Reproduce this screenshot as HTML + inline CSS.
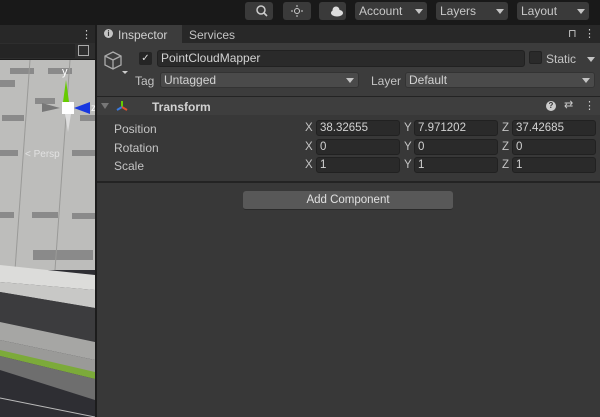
<!DOCTYPE html>
<html><head><meta charset="utf-8"><style>
*{box-sizing:border-box;margin:0;padding:0}
body{width:600px;height:417px;overflow:hidden;background:#191919;font-family:"Liberation Sans",sans-serif;font-size:11px;color:#c4c4c4;position:relative}
.a{position:absolute}
.btn{position:absolute;top:2px;height:18px;background:#3a3a3a;border-radius:3px;color:#c8c8c8;font-size:12px;line-height:18px;padding-left:4px}
.tri{position:absolute;width:0;height:0;border-left:4px solid transparent;border-right:4px solid transparent;border-top:5px solid #c4c4c4}
.fld{position:absolute;height:16px;background:#2a2a2a;border:1px solid #212121;border-radius:3px;color:#d2d2d2;line-height:14px;padding-left:3px;font-size:11.5px}
.lbl{position:absolute;font-size:11.5px;color:#c4c4c4}
</style></head><body>
<div class="btn" style="left:245px;width:28px"><svg width="28" height="18"><circle cx="12" cy="8" r="4" stroke="#ccc" stroke-width="1.5" fill="none"/><line x1="15" y1="11" x2="18" y2="14" stroke="#ccc" stroke-width="1.6"/></svg></div>
<div class="btn" style="left:283px;width:28px"><svg width="28" height="18"><circle cx="10" cy="9" r="2.5" stroke="#ccc" fill="none"/><g stroke="#ccc"><line x1="10" y1="3" x2="10" y2="5"/><line x1="10" y1="13" x2="10" y2="15"/><line x1="4" y1="9" x2="6" y2="9"/><line x1="14" y1="9" x2="16" y2="9"/></g></svg></div>
<div class="btn" style="left:319px;width:27px"><svg width="27" height="18"><ellipse cx="14" cy="11" rx="6" ry="3.5" fill="#ddd"/><circle cx="13" cy="8" r="3.5" fill="#ddd"/></svg></div>
<div class="btn" style="left:355px;width:72px">Account<div class="tri" style="left:60px;top:7px"></div></div>
<div class="btn" style="left:436px;width:72px">Layers<div class="tri" style="left:60px;top:7px"></div></div>
<div class="btn" style="left:517px;width:72px">Layout<div class="tri" style="left:60px;top:7px"></div></div>
<div class="a" style="left:0;top:25px;width:95px;height:18px;background:#282828"></div>
<div class="a" style="left:81px;top:28px;color:#ccc;font-size:11px">⋮</div>
<div class="a" style="left:0;top:43px;width:95px;height:17px;background:#2e2e2e;border-bottom:1px solid #1a1a1a"></div>
<div class="a" style="left:0;top:44px;width:75px;height:14px;background:#252525"></div>
<div class="a" style="left:78px;top:45px;width:11px;height:11px;border:1px solid #aaa"></div>
<svg class="a" style="left:0;top:60px" width="95" height="357">
<rect width="95" height="357" fill="#2e2e33"/>
<rect width="95" height="210" fill="#bdbdbb"/>
<g fill="#8a8a8a"><rect x="10" y="8" width="24" height="6"/><rect x="48" y="8" width="24" height="6"/><rect x="0" y="20" width="15" height="7"/><rect x="35" y="38" width="20" height="6"/><rect x="2" y="55" width="22" height="6"/><rect x="80" y="55" width="15" height="6"/><rect x="0" y="90" width="18" height="6"/><rect x="72" y="90" width="23" height="6"/><rect x="0" y="152" width="14" height="6"/><rect x="32" y="152" width="26" height="6"/><rect x="72" y="153" width="23" height="6"/><rect x="33" y="190" width="60" height="10"/></g>
<g stroke="#9a9a98" stroke-width="1"><line x1="30" y1="0" x2="15" y2="210"/><line x1="70" y1="0" x2="55" y2="210"/></g>
<polygon points="0,205 95,215 95,230 0,222" fill="#dcdcda"/>
<polygon points="0,222 95,230 95,248 0,232" fill="#c8c8c6"/>
<polygon points="0,232 95,248 95,282 0,262" fill="#3c3c3e"/>
<polygon points="0,262 95,282 95,300 0,280" fill="#a6a6a4"/>
<polygon points="0,280 95,300 95,318 0,294" fill="#9a9a98"/>
<polygon points="0,290 95,312 95,319 0,296" fill="#7caa3a"/>
<polygon points="0,296 95,319 95,340 0,310" fill="#6e6e6e"/>
<line x1="0" y1="338" x2="95" y2="357" stroke="#bbb" stroke-width="1"/>
</svg>
<div class="a" style="left:25px;top:149px;font-size:10px;color:#e8e8e8;opacity:.85">&lt; Persp</div>
<svg class="a" style="left:20px;top:62px" width="75" height="75"><text x="42" y="13" fill="#fff" font-size="11" font-family="Liberation Sans">y</text><polygon points="43,40 49,40 46,18" fill="#6c0"/><polygon points="54,46 70,40 70,52" fill="#1838e0"/><text x="71" y="49" fill="#fff" font-size="10" font-family="Liberation Sans">z</text><polygon points="22,41 22,50 40,46" fill="#777"/><rect x="42" y="40" width="12" height="12" fill="#fff"/><polygon points="45,52 51,52 48,70" fill="#ddd"/></svg>
<div class="a" style="left:95px;top:25px;width:2px;height:392px;background:#1c1c1c"></div>
<div class="a" style="left:97px;top:25px;width:503px;height:392px;background:#383838"></div>
<div class="a" style="left:97px;top:25px;width:503px;height:18px;background:#282828"></div>
<div class="a" style="left:97px;top:25px;width:85px;height:18px;background:#3c3c3c"></div>
<div class="a" style="left:104px;top:29px;width:9px;height:9px;border-radius:50%;background:#c4c4c4;color:#383838;font-size:8px;font-weight:bold;text-align:center;line-height:9px">i</div>
<div class="a" style="left:118px;top:28px;font-size:12px;color:#d0d0d0">Inspector</div>
<div class="a" style="left:189px;top:28px;font-size:12px;color:#c4c4c4">Services</div>
<div class="a" style="left:568px;top:27px;font-size:11px;color:#ccc">⊓</div>
<div class="a" style="left:584px;top:27px;color:#ccc">⋮</div>
<div class="a" style="left:97px;top:43px;width:503px;height:54px;background:#3c3c3c;border-bottom:1px solid #232323"></div>
<svg class="a" style="left:102px;top:50px" width="26" height="26"><path d="M11 2 L19 6 L19 15 L11 19 L3 15 L3 6 Z M3 6 L11 10 L19 6 M11 10 L11 19" stroke="#aaa" stroke-width="1.3" fill="none"/><polygon points="20,21 26,21 23,24" fill="#ccc"/></svg>
<div class="a" style="left:139px;top:52px;width:13px;height:13px;background:#252525;border-radius:2px;color:#ddd;font-size:10px;text-align:center;line-height:13px">✓</div>
<div class="fld" style="left:157px;top:50px;width:368px;height:17px;line-height:15px;font-size:12px">PointCloudMapper</div>
<div class="a" style="left:529px;top:51px;width:13px;height:13px;background:#2a2a2a;border:1px solid #222;border-radius:2px"></div>
<div class="a" style="left:546px;top:52px;font-size:12px">Static</div>
<div class="tri" style="left:587px;top:57px"></div>
<div class="a" style="left:135px;top:74px;font-size:12px">Tag</div>
<div class="fld" style="left:160px;top:72px;width:199px;background:#4a4a4a;border-color:#333;font-size:12px">Untagged</div>
<div class="tri" style="left:346px;top:78px"></div>
<div class="a" style="left:371px;top:74px;font-size:12px">Layer</div>
<div class="fld" style="left:405px;top:72px;width:190px;background:#4a4a4a;border-color:#333;font-size:12px">Default</div>
<div class="tri" style="left:582px;top:78px"></div>
<div class="a" style="left:97px;top:97px;width:503px;height:18px;background:#3e3e3e"></div>
<div class="a" style="left:101px;top:103px;border-left:4px solid transparent;border-right:4px solid transparent;border-top:6px solid #777"></div>
<svg class="a" style="left:114px;top:99px" width="16" height="14"><line x1="8" y1="2" x2="8" y2="8" stroke="#6c0" stroke-width="2"/><line x1="8" y1="8" x2="3" y2="11" stroke="#3a7ae0" stroke-width="2"/><line x1="8" y1="8" x2="13" y2="11" stroke="#e05030" stroke-width="2"/></svg>
<div class="a" style="left:152px;top:100px;font-size:12px;font-weight:bold;color:#d2d2d2">Transform</div>
<div class="a" style="left:546px;top:101px;width:10px;height:10px;border-radius:50%;background:#ccc;color:#333;font-size:8px;font-weight:bold;text-align:center;line-height:10px">?</div>
<div class="a" style="left:564px;top:98px;color:#ccc;font-size:11px">⇄</div>
<div class="a" style="left:584px;top:99px;color:#ccc">⋮</div>
<div class="a" style="left:114px;top:122px;font-size:12px">Position</div>
<div class="a" style="left:114px;top:141px;font-size:12px">Rotation</div>
<div class="a" style="left:114px;top:159px;font-size:12px">Scale</div>
<div class="lbl" style="left:305px;top:122px">X</div><div class="fld" style="left:316px;top:120px;width:84px">38.32655</div>
<div class="lbl" style="left:404px;top:122px">Y</div><div class="fld" style="left:414px;top:120px;width:84px">7.971202</div>
<div class="lbl" style="left:502px;top:122px">Z</div><div class="fld" style="left:512px;top:120px;width:84px">37.42685</div>
<div class="lbl" style="left:305px;top:141px">X</div><div class="fld" style="left:316px;top:139px;width:84px">0</div>
<div class="lbl" style="left:404px;top:141px">Y</div><div class="fld" style="left:414px;top:139px;width:84px">0</div>
<div class="lbl" style="left:502px;top:141px">Z</div><div class="fld" style="left:512px;top:139px;width:84px">0</div>
<div class="lbl" style="left:305px;top:159px">X</div><div class="fld" style="left:316px;top:157px;width:84px">1</div>
<div class="lbl" style="left:404px;top:159px">Y</div><div class="fld" style="left:414px;top:157px;width:84px">1</div>
<div class="lbl" style="left:502px;top:159px">Z</div><div class="fld" style="left:512px;top:157px;width:84px">1</div>
<div class="a" style="left:97px;top:181px;width:503px;height:2px;background:#232323"></div>
<div class="a" style="left:243px;top:191px;width:210px;height:19px;background:#585858;border-radius:3px;border-bottom:1px solid #2a2a2a;text-align:center;line-height:18px;color:#e0e0e0;font-size:11.5px">Add Component</div>
</body></html>
